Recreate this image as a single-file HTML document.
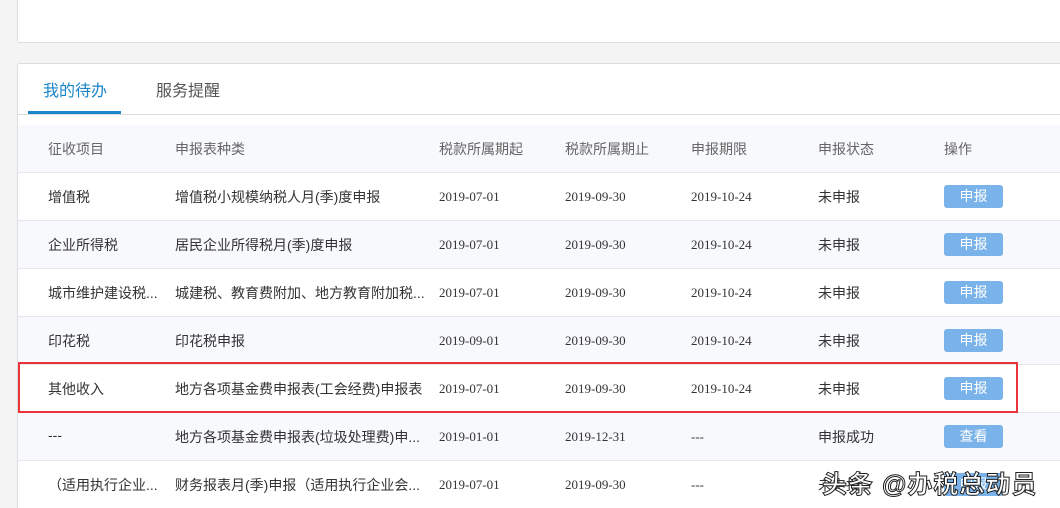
<!DOCTYPE html>
<html><head><meta charset="utf-8"><style>
html,body{margin:0;width:1060px;height:508px;overflow:hidden}
body{background:#f4f4f4;position:relative;font-family:"Liberation Sans","Noto Sans CJK SC",sans-serif;font-size:14px;color:#333}
.c1{position:absolute;left:17px;top:-5px;width:1060px;height:46px;background:#fff;border:1px solid #ddd;border-radius:3px}
.c2{position:absolute;left:17px;top:63px;width:1060px;height:460px;background:#fff;border:1px solid #ddd;border-radius:3px}
.tab{position:absolute;top:77px;font-size:16px}
.ul{position:absolute;left:28px;top:111px;width:93px;height:3px;background:#1a85c8}
.bl{position:absolute;left:18px;top:114px;width:1042px;height:1px;background:#ddd}
.row{position:absolute;left:18px;width:1042px;height:47px;border-bottom:1px solid #e4e6ea}
.row span{position:absolute;top:14px;white-space:nowrap}
.row span.d{font-family:"Liberation Serif",serif;font-size:13px;top:16px}
.h span{color:#666}
.row span.b{left:926px;top:12px;width:59px;height:23px;background:#7ab3ea;border-radius:3px;color:#fff;text-align:center;line-height:23px}
.alt{background:#f8f9fc}
.red{position:absolute;left:18px;top:362px;width:996px;height:47px;border:2px solid #e8343a}
.wm{position:absolute;left:822px;top:465px;font-size:25px;color:#fff;font-weight:bold;-webkit-text-stroke:1px #222;letter-spacing:1px}
</style></head><body>
<div class="c1"></div><div class="c2"></div>
<div class="tab" style="left:43px;color:#1a85c8">我的待办</div>
<div class="tab" style="left:156px;color:#555">服务提醒</div>
<div class="ul"></div><div class="bl"></div>

<div class="row h alt" style="top:125px"><span style="left:30px">征收项目</span><span style="left:157px">申报表种类</span><span style="left:421px">税款所属期起</span><span style="left:547px">税款所属期止</span><span style="left:673px">申报期限</span><span style="left:800px">申报状态</span><span style="left:926px">操作</span></div>

<div class="row" style="top:173px"><span style="left:30px">增值税</span><span style="left:157px">增值税小规模纳税人月(季)度申报</span><span class="d" style="left:421px">2019-07-01</span><span class="d" style="left:547px">2019-09-30</span><span class="d" style="left:673px">2019-10-24</span><span style="left:800px">未申报</span><span class="b">申报</span></div>
<div class="row alt" style="top:221px"><span style="left:30px">企业所得税</span><span style="left:157px">居民企业所得税月(季)度申报</span><span class="d" style="left:421px">2019-07-01</span><span class="d" style="left:547px">2019-09-30</span><span class="d" style="left:673px">2019-10-24</span><span style="left:800px">未申报</span><span class="b">申报</span></div>
<div class="row" style="top:269px"><span style="left:30px">城市维护建设税...</span><span style="left:157px">城建税、教育费附加、地方教育附加税...</span><span class="d" style="left:421px">2019-07-01</span><span class="d" style="left:547px">2019-09-30</span><span class="d" style="left:673px">2019-10-24</span><span style="left:800px">未申报</span><span class="b">申报</span></div>
<div class="row alt" style="top:317px"><span style="left:30px">印花税</span><span style="left:157px">印花税申报</span><span class="d" style="left:421px">2019-09-01</span><span class="d" style="left:547px">2019-09-30</span><span class="d" style="left:673px">2019-10-24</span><span style="left:800px">未申报</span><span class="b">申报</span></div>
<div class="row" style="top:365px"><span style="left:30px">其他收入</span><span style="left:157px">地方各项基金费申报表(工会经费)申报表</span><span class="d" style="left:421px">2019-07-01</span><span class="d" style="left:547px">2019-09-30</span><span class="d" style="left:673px">2019-10-24</span><span style="left:800px">未申报</span><span class="b">申报</span></div>
<div class="row alt" style="top:413px"><span style="left:30px">---</span><span style="left:157px">地方各项基金费申报表(垃圾处理费)申...</span><span class="d" style="left:421px">2019-01-01</span><span class="d" style="left:547px">2019-12-31</span><span class="d" style="left:673px">---</span><span style="left:800px">申报成功</span><span class="b">查看</span></div>
<div class="row" style="top:461px"><span style="left:30px">（适用执行企业...</span><span style="left:157px">财务报表月(季)申报（适用执行企业会...</span><span class="d" style="left:421px">2019-07-01</span><span class="d" style="left:547px">2019-09-30</span><span class="d" style="left:673px">---</span><span style="left:800px">未申报</span><span class="b">申报</span></div>
<div class="red"></div>
<div class="wm">头条 @办税总动员</div>
</body></html>
